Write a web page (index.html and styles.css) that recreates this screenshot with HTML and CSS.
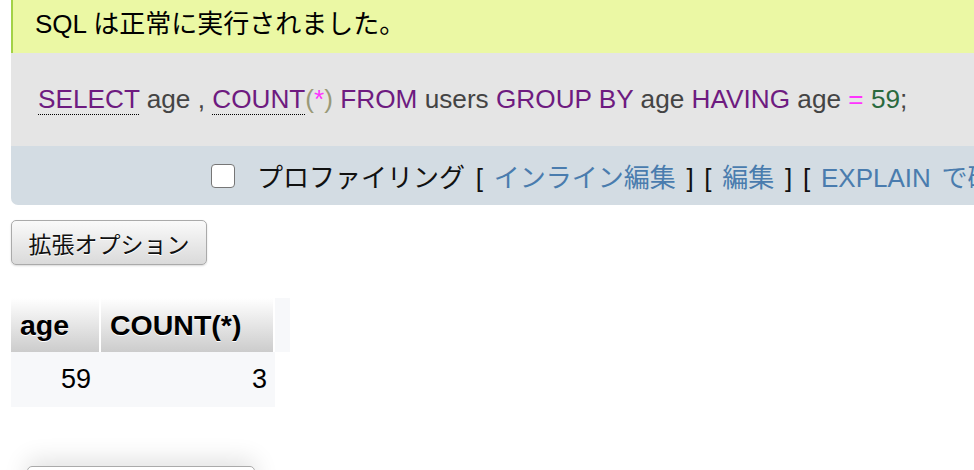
FILE: index.html
```html
<!DOCTYPE html>
<html lang="ja">
<head>
<meta charset="utf-8">
<title>SQL</title>
<link rel="stylesheet" href="styles.css">
</head>
<body>
<div class="page">
  <div class="success">SQL は正常に実行されました。</div>
  <div class="sql-outer">
    <div class="sql-code"><span class="kw doc">SELECT</span> <span class="ident">age</span> <span class="ident">,</span> <span class="kw doc">COUNT</span><span class="punct">(</span><span class="op">*</span><span class="punct">)</span> <span class="kw">FROM</span> <span class="ident">users</span> <span class="kw">GROUP BY</span> <span class="ident">age</span> <span class="kw">HAVING</span> <span class="ident">age</span> <span class="op">=</span> <span class="num">59</span><span class="ident">;</span></div>
    <div class="tools">
      <span class="checkbox"></span>
      <span class="tools-text">プロファイリング [ <a class="link">インライン編集</a> ] [ <a class="link">編集</a> ] [ <a class="link">EXPLAIN で確認</a> ] [ <a class="link">PHP コードの作成</a> ] [ <a class="link">再読み込み</a> ]</span>
    </div>
  </div>
  <div class="btn-row"><button class="btn">拡張オプション</button></div>
  <div class="table-wrap">
    <table class="data">
      <thead>
        <tr><th class="c-age">age</th><th class="c-count">COUNT(*)</th><th class="c-extra"></th></tr>
      </thead>
      <tbody>
        <tr><td class="num-cell c-age-td">59</td><td class="num-cell c-count-td">3</td></tr>
      </tbody>
    </table>
  </div>
  <div class="bottom-box"></div>
</div>
</body>
</html>
```
FILE: styles.css
```css
html, body {
  margin: 0;
  padding: 0;
  background: #fff;
  overflow: hidden;
}
body {
  font-family: "Liberation Sans", Arial, "Noto Sans CJK JP", sans-serif;
  color: #000;
}
.page {
  padding-left: 11px;
  width: 1400px;
}
.success {
  height: 53px;
  line-height: 49px;
  box-sizing: border-box;
  background: #ebf8a4;
  border-left: 2px solid #a2d246;
  padding-left: 22px;
  font-size: 26px;
  white-space: nowrap;
}
.sql-outer {
  border-bottom-left-radius: 7px;
  overflow: hidden;
}
.sql-code {
  height: 93px;
  line-height: 93px;
  background: #e5e5e5;
  padding-left: 27px;
  font-size: 26.2px;
  white-space: nowrap;
  color: #444;
}
.kw { color: #6e1b80; }
.doc { border-bottom: 1px dotted #000; }
.ident { color: #444; }
.punct { color: #999977; }
.op { color: #ff33ff; }
.num { color: #2a6a3e; }
.tools {
  height: 59px;
  background: #d3dce3;
  display: flex;
  align-items: center;
  padding-left: 200px;
  font-size: 26px;
  white-space: nowrap;
  color: #111;
}
.tools-text {
  word-spacing: 3.5px;
}
.checkbox {
  width: 22px;
  height: 22px;
  border: 1px solid #767676;
  border-radius: 4px;
  background: #fff;
  margin-right: 22px;
  flex: none;
}
.link { color: #4a7cae; text-decoration: none; }
.btn-row {
  padding-top: 15px;
}
.btn {
  width: 196px;
  height: 45px;
  font-family: "Liberation Sans", "Noto Sans CJK JP", sans-serif;
  font-size: 23px;
  color: #111;
  border: 1px solid #aaa;
  border-radius: 5px;
  background: linear-gradient(#fafafa, #dadada);
  box-shadow: 0 1px 2px rgba(0,0,0,0.15);
  padding: 0;
  text-shadow: 0 1px 0 #fff;
}
.table-wrap {
  padding-top: 33px;
}
.data {
  border-collapse: separate;
  border-spacing: 0;
  table-layout: fixed;
}
.data th {
  height: 54px;
  padding: 0 9px;
  text-align: left;
  font-size: 28.5px;
  font-weight: bold;
  background: linear-gradient(#ffffff, #cccccc);
  text-shadow: 0 1px 0 #fff;
  box-sizing: content-box;
}
.data th.c-age { width: 70px; border-right: 2px solid #fff; }
.data th.c-count { width: 154px; border-right: 2px solid #fff; }
.data th.c-extra { width: 15px; padding: 0; background: #f7f8fa; }
.data td {
  height: 55px;
  padding: 0 8px;
  font-size: 27px;
  background: #f7f8fa;
  box-sizing: border-box;
}
.data td.c-age-td { border-right: 2px solid #f7f8fa; }
.num-cell { text-align: right; }
.bottom-box {
  margin-top: 59px;
  margin-left: 16px;
  width: 226px;
  height: 40px;
  border: 1px solid #aaa;
  border-radius: 5px;
  box-shadow: 0 -6px 24px rgba(0,0,0,0.12);
  background: #fff;
}
```
